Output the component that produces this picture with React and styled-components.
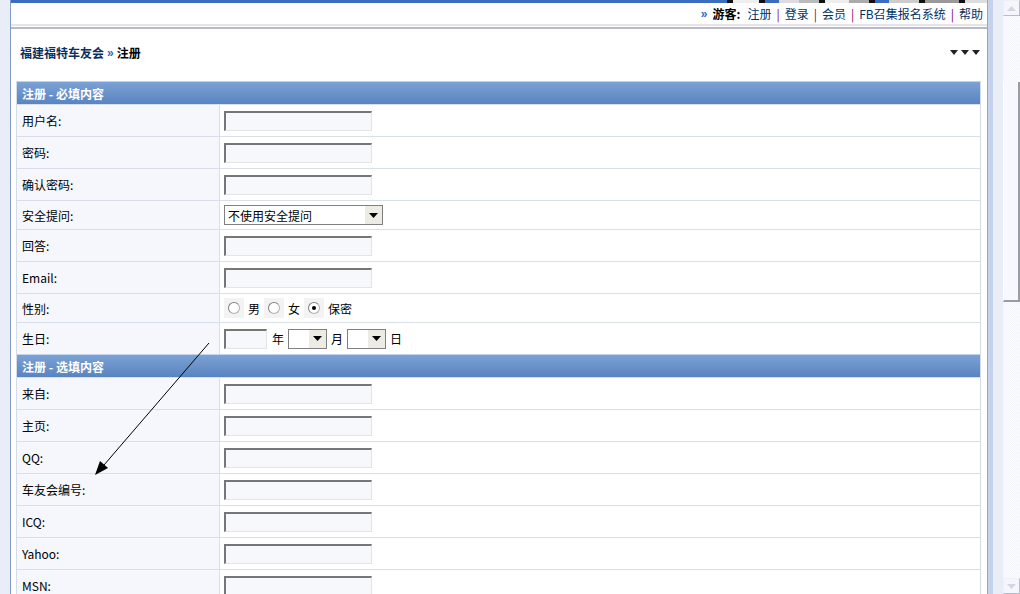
import React from "react"
import styled, { createGlobalStyle } from "styled-components"

const GlobalStyle = createGlobalStyle`
  html, body {
    margin: 0;
    padding: 0;
    height: 100%;
    overflow: hidden;
    background: #e8edf8;
    font-family: "Liberation Sans", "Noto Sans CJK SC", Arial, sans-serif;
    font-size: 12px;
    color: #000;
  }
`

const Viewport = styled.div`
  display: flex;
  width: 1020px;
  height: 594px;
  position: relative;
`

const Gutter = styled.div`
  flex: 1;
  display: flex;
  padding: 0 10px;
  overflow: hidden;
`

const Wrap = styled.div`
  flex: 1;
  background: #fff;
  border-left: 1px solid #7f9dc8;
  border-right: 1px solid #9ea8b8;
  box-shadow: 5px 0 0 #c5d2ec;
  margin-right: 5px;
  height: 700px;
`

const TopBand = styled.div`
  height: 3px;
  background: #3a6cbf;
  display: flex;
  justify-content: flex-end;
`

const Banner = styled.div`
  width: 268px;
  height: 3px;
  background: linear-gradient(
    90deg,
    #3a6cbf 0 8px,
    #111 8px 14px,
    #eee 14px 40px,
    #111 40px 46px,
    #3a6cbf 46px 60px,
    #ddd 60px 80px,
    #bbb 80px 100px,
    #111 100px 106px,
    #eee 106px 130px,
    #aaa 130px 150px,
    #111 150px 156px,
    #3a6cbf 156px 170px,
    #ccc 170px 200px,
    #111 200px 206px,
    #999 206px 240px,
    #111 240px 246px,
    #ddd 246px
  );
`

const NavBar = styled.div`
  height: 21px;
  display: flex;
  justify-content: flex-end;
  align-items: center;
  padding-right: 4px;
  font-family: "Noto Sans CJK SC", sans-serif;
  font-size: 12px;
  gap: 5px;
`

const Raquo = styled.span`
  color: ${p => p.color || "#3366cc"};
  font-weight: bold;
  font-family: "Liberation Sans", sans-serif;
`

const Guest = styled.b`
  color: #000;
  margin-right: 2px;
`

const NavLink = styled.a`
  color: #003366;
  text-decoration: none;
`

const Sep = styled.span`
  color: #800060;
`

const Divider = styled.div`
  height: 6px;
  background: linear-gradient(
    #fff 0 0,
    #e4e4ea 0 2px,
    #fff 2px 3px,
    #b8b8c6 3px 5px,
    #fff 5px
  );
`

const Crumbs = styled.div`
  box-sizing: border-box;
  height: 51px;
  display: flex;
  align-items: center;
  justify-content: space-between;
  padding: 0 7px 6px 9px;
  font-family: "Noto Sans CJK SC", sans-serif;
  font-weight: bold;
  font-size: 12px;
`

const CrumbTrail = styled.div`
  display: flex;
  align-items: center;
  gap: 3px;
`

const Forum = styled.span`
  color: #0b2f5a;
`

const Menu = styled.svg`
  display: block;
  margin-top: 1px;
`

const Table = styled.div`
  margin: 0 6px 0 5px;
  border-left: 1px solid #d4dcea;
  border-right: 1px solid #d4dcea;
  font-family: "Noto Sans CJK SC", sans-serif;
  font-size: 12px;
`

const Head = styled.div`
  height: 22px;
  border-top: 1px solid #c4d2e8;
  background: linear-gradient(#7ba2d4, #5a84c1);
  color: #fff;
  font-weight: bold;
  display: flex;
  align-items: center;
  padding-left: 5px;
`

const Row = styled.div`
  display: grid;
  grid-template-columns: 203px 1fr;
  height: ${p => p.h || 31}px;
  border-top: 1px solid #d8dfea;
`

const Label = styled.div`
  background: #f5f7fc;
  border-right: 1px solid #d8dfea;
  display: flex;
  align-items: center;
  padding-left: 5px;
`

const Field = styled.div`
  display: flex;
  align-items: center;
  padding-left: 4px;
  gap: ${p => (p.tight ? 0 : 4)}px;
`

const Input = styled.div`
  box-sizing: border-box;
  width: ${p => p.w || 148}px;
  height: 20px;
  background: #f7f8fc;
  border-top: 2px solid #767676;
  border-left: 2px solid #767676;
  border-right: 1px solid #e2e4ea;
  border-bottom: 1px solid #e2e4ea;
`

const Select = styled.div`
  box-sizing: border-box;
  width: ${p => p.w}px;
  height: 20px;
  border: 1px solid #808080;
  background: #fff;
  display: flex;
  align-items: stretch;
`

const SelectText = styled.span`
  flex: 1;
  padding-left: 3px;
  display: flex;
  align-items: center;
`

const SelectBtn = styled.span`
  width: 17px;
  background: #ecebe4;
  display: flex;
  align-items: center;
  justify-content: center;
`

const Radio = styled.span`
  width: 20px;
  height: 20px;
  background: #f3f3f3;
  display: flex;
  align-items: center;
  justify-content: center;
`

const Dot = styled.span`
  box-sizing: border-box;
  width: 12px;
  height: 12px;
  border-radius: 50%;
  border: 1px solid #b0b0b0;
  border-top-color: #808080;
  border-left-color: #808080;
  background: #fff;
  display: flex;
  align-items: center;
  justify-content: center;
  &::after {
    content: "";
    width: 4px;
    height: 4px;
    border-radius: 50%;
    background: ${p => (p.on ? "#000" : "transparent")};
  }
`

const Word = styled.span`
  margin: 0 ${p => p.mr || 0}px 0 ${p => p.ml || 0}px;
`

const Scrollbar = styled.div`
  width: 17px;
  height: 594px;
  background: repeating-conic-gradient(#f3f5fb 0 25%, #fbfcfe 0 50%) 0 0 / 2px 2px;
  display: flex;
  flex-direction: column;
`

const ScrollBtn = styled.div`
  height: 14px;
  border: 1px solid #eef0f6;
  border-right-color: #b9bcc6;
  border-bottom-color: #b9bcc6;
  background: #f4f6fb;
  display: flex;
  align-items: center;
  justify-content: center;
`

const Track = styled.div`
  flex: 1;
  padding-top: 66px;
`

const Thumb = styled.div`
  height: 218px;
  background: #f7f8fd;
  border-right: 2px solid #9a9ca4;
  border-bottom: 2px solid #9a9ca4;
  border-left: 1px solid #fff;
`

const Pointer = styled.svg`
  position: absolute;
  left: 0;
  top: 0;
  pointer-events: none;
`

const Arrow = ({ up }) => (
  <svg width="9" height="5" viewBox="0 0 9 5">
    <path d={up ? "M0 5 L4.5 0 L9 5Z" : "M0 0 L4.5 5 L9 0Z"} fill="#d0d6e4" />
  </svg>
)

const Caret = () => (
  <svg width="9" height="5" viewBox="0 0 9 5">
    <path d="M0 0 L9 0 L4.5 5Z" fill="#000" />
  </svg>
)

const DropDown = ({ w, text }) => (
  <Select w={w}>
    <SelectText>{text}</SelectText>
    <SelectBtn>
      <Caret />
    </SelectBtn>
  </Select>
)

const TextRow = ({ label, h = 31 }) => (
  <Row h={h}>
    <Label>{label}</Label>
    <Field>
      <Input />
    </Field>
  </Row>
)

const App = () => {
  return (
    <Viewport>
      <GlobalStyle />
      <Gutter>
        <Wrap>
          <TopBand>
            <Banner />
          </TopBand>
          <NavBar>
            <Raquo>»</Raquo>
            <Guest>游客:</Guest>
            <NavLink>注册</NavLink>
            <Sep>|</Sep>
            <NavLink>登录</NavLink>
            <Sep>|</Sep>
            <NavLink>会员</NavLink>
            <Sep>|</Sep>
            <NavLink>FB召集报名系统</NavLink>
            <Sep>|</Sep>
            <NavLink>帮助</NavLink>
          </NavBar>
          <Divider />
          <Crumbs>
            <CrumbTrail>
              <Forum>福建福特车友会</Forum>
              <Raquo>»</Raquo>
              <span>注册</span>
            </CrumbTrail>
            <Menu width="30" height="6" viewBox="0 0 30 6">
              <path d="M0 0 H8 L4 5Z M11 0 H19 L15 5Z M22 0 H30 L26 5Z" fill="#222" />
            </Menu>
          </Crumbs>

          <Table>
            <Head>注册 - 必填内容</Head>
            <TextRow label="用户名:" />
            <TextRow label="密码:" />
            <TextRow label="确认密码:" />
            <Row h={28}>
              <Label>安全提问:</Label>
              <Field>
                <DropDown w={159} text="不使用安全提问" />
              </Field>
            </Row>
            <TextRow label="回答:" />
            <TextRow label="Email:" />
            <Row h={28}>
              <Label>性别:</Label>
              <Field tight>
                <Radio>
                  <Dot />
                </Radio>
                <Word ml={4} mr={4}>男</Word>
                <Radio>
                  <Dot />
                </Radio>
                <Word ml={4} mr={4}>女</Word>
                <Radio>
                  <Dot on />
                </Radio>
                <Word ml={4}>保密</Word>
              </Field>
            </Row>
            <Row h={31}>
              <Label>生日:</Label>
              <Field>
                <Input w={43} />
                <Word ml={1}>年</Word>
                <DropDown w={39} />
                <span>月</span>
                <DropDown w={39} />
                <span>日</span>
              </Field>
            </Row>
            <Head>注册 - 选填内容</Head>
            <TextRow label="来自:" />
            <TextRow label="主页:" />
            <TextRow label="QQ:" />
            <TextRow label="车友会编号:" />
            <TextRow label="ICQ:" />
            <TextRow label="Yahoo:" />
            <TextRow label="MSN:" />
          </Table>
        </Wrap>
      </Gutter>
      <Scrollbar>
        <ScrollBtn>
          <Arrow up />
        </ScrollBtn>
        <Track>
          <Thumb />
        </Track>
        <ScrollBtn>
          <Arrow />
        </ScrollBtn>
      </Scrollbar>
      <Pointer width="1020" height="594">
        <line x1="209" y1="343" x2="104" y2="465" stroke="#000" strokeWidth="1" />
        <path d="M95 475 L100 461 L108 468Z" fill="#000" />
      </Pointer>
    </Viewport>
  )
}

export default App
